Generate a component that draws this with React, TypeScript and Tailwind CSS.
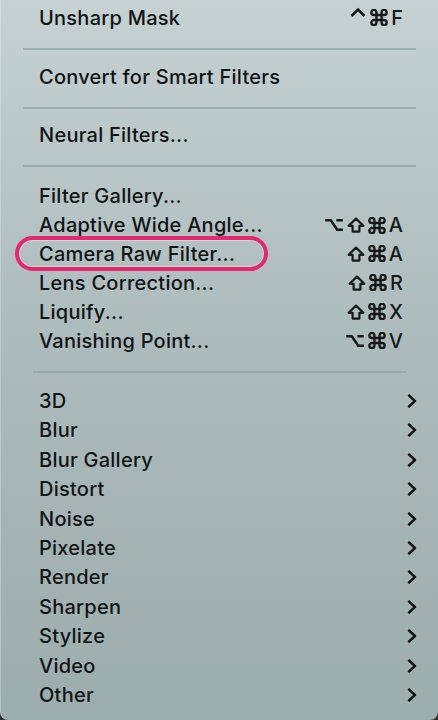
import React from "react";

type Item = { label: string; keys?: string[]; sub?: boolean; ring?: boolean };

const Chevron = () => (
  <svg width="10" height="14" viewBox="0 0 10 14" className="shrink-0">
    <path d="M2 1.5 L8 7 L2 12.5" fill="none" stroke="#111" strokeWidth="2.4" strokeLinecap="round" strokeLinejoin="round" />
  </svg>
);

// modifier key glyphs, drawn to match the macOS menu symbols
const KeyGlyph = ({ k }: { k: string }) => {
  const stroke = "#151919";
  if (k === "opt")
    return (
      <svg width="20" height="14" viewBox="0 0 20 14">
        <path d="M1.2 2.2h5.6l6.4 9.6h5.8M12.4 2.2h6.4" fill="none" stroke={stroke} strokeWidth="2.5" strokeLinejoin="round" />
      </svg>
    );
  if (k === "shift")
    return (
      <svg width="18" height="16" viewBox="0 0 18 16">
        <path d="M9 1.6 L16.4 8.8 H12.4 V14.6 H5.6 V8.8 H1.6 Z" fill="none" stroke={stroke} strokeWidth="2.2" strokeLinejoin="round" />
      </svg>
    );
  if (k === "cmd")
    return (
      <svg width="18" height="17" viewBox="2 2 20 20">
        <path
          d="M15 6v12a3 3 0 1 0 3-3H6a3 3 0 1 0 3 3V6a3 3 0 1 0-3 3h12a3 3 0 1 0-3-3"
          fill="none"
          stroke={stroke}
          strokeWidth="2.8"
        />
      </svg>
    );
  if (k === "ctrl")
    return (
      <svg width="18" height="16" viewBox="0 0 18 16" className="-translate-y-[3px]">
        <path d="M2.5 9 L9 2.6 L15.5 9" fill="none" stroke={stroke} strokeWidth="2.5" strokeLinejoin="miter" />
      </svg>
    );
  return <span className="text-[20px] font-medium leading-none">{k}</span>;
};

const Shortcut = ({ keys }: { keys: string[] }) => (
  <div className="flex items-center gap-[3px] text-[#151919]">
    {keys.map((k, i) => (
      <KeyGlyph key={i} k={k} />
    ))}
  </div>
);

const Row = ({ item, h }: { item: Item; h: string }) => (
  <div className={`relative flex ${h} items-center justify-between pl-[38px] pr-[21px]`}>
    {item.ring && (
      <div className="absolute left-[14px] top-[-3px] h-[35px] w-[253px] rounded-[18px] border-[4px] border-[#e8266f] shadow-[inset_0_0_0_1px_rgba(220,255,240,0.45)]" />
    )}
    <span className="text-[20px] font-medium tracking-[0.25px] text-[#101414]">{item.label}</span>
    {item.keys && (
      <div className="pr-[14px]">
        <Shortcut keys={item.keys} />
      </div>
    )}
    {item.sub && <Chevron />}
  </div>
);

const Sep = ({ cls }: { cls: string }) => (
  <div className={cls}>
    <div className="h-[2px] bg-[#92a2a3]/75" />
  </div>
);

const tools: Item[] = [
  { label: "Filter Gallery..." },
  { label: "Adaptive Wide Angle...", keys: ["opt", "shift", "cmd", "A"] },
  { label: "Camera Raw Filter...", keys: ["shift", "cmd", "A"], ring: true },
  { label: "Lens Correction...", keys: ["shift", "cmd", "R"] },
  { label: "Liquify...", keys: ["shift", "cmd", "X"] },
  { label: "Vanishing Point...", keys: ["opt", "cmd", "V"] },
];

const groups = [
  "3D",
  "Blur",
  "Blur Gallery",
  "Distort",
  "Noise",
  "Pixelate",
  "Render",
  "Sharpen",
  "Stylize",
  "Video",
  "Other",
];

export default function App() {
  return (
    <div className="h-[720px] w-[438px] overflow-hidden bg-[#2a2e2f] font-[Inter,sans-serif]">
      <div className="h-full w-full rounded-b-[8px] border-l border-white/25 bg-gradient-to-b from-[#c6d2d2] via-[#adbcbd] via-45% to-[#9cadae] pt-[3.3px]">
        <Row h="h-[29.4px]" item={{ label: "Unsharp Mask", keys: ["ctrl", "cmd", "F"] }} />
        <Sep cls="mx-[22px] mt-[15.6px] mb-[12.2px]" />
        <Row h="h-[29.4px]" item={{ label: "Convert for Smart Filters" }} />
        <Sep cls="mx-[22px] mt-[14.8px] mb-[11.8px]" />
        <Row h="h-[29.4px]" item={{ label: "Neural Filters..." }} />
        <Sep cls="mx-[22px] mt-[15.1px] mb-[14.75px]" />
        {tools.map((t) => (
          <Row key={t.label} h="h-[28.9px]" item={t} />
        ))}
        <Sep cls="mx-[32px] mt-[15.55px] mb-[13.8px]" />
        {groups.map((g) => (
          <Row key={g} h="h-[29.4px]" item={{ label: g, sub: true }} />
        ))}
      </div>
    </div>
  );
}
